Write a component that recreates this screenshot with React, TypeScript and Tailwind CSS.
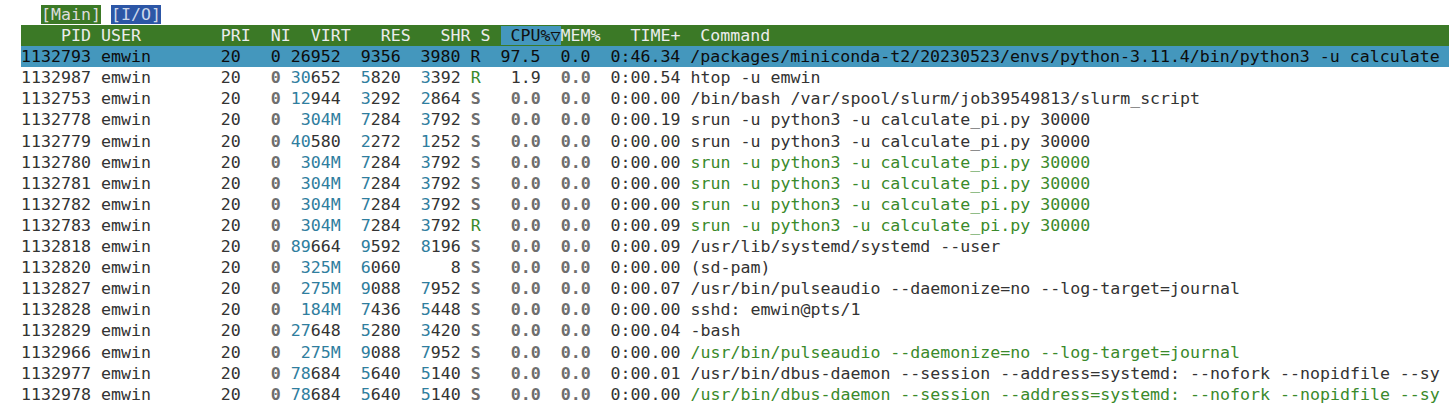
import React from "react";

type Seg = { t: string; c?: string };

const TXT = "text-[#333333]";
const DIM = "text-[#6e6e6e] font-bold";
const CYAN = "text-[#2f7e9e]";
const GREEN = "text-[#3a8a2b]";

type Row = {
  pid: string;
  virt: string;
  res: string;
  shr: string;
  s: "R" | "S";
  cpu: string;
  mem: string;
  time: string;
  cmd: string;
  thread?: boolean;
  sel?: boolean;
};

const rows: Row[] = [
  { pid: "1132793", virt: "26952", res: "9356", shr: "3980", s: "R", cpu: "97.5", mem: "0.0", time: "0:46.34", cmd: "/packages/miniconda-t2/20230523/envs/python-3.11.4/bin/python3 -u calculate", sel: true },
  { pid: "1132987", virt: "30652", res: "5820", shr: "3392", s: "R", cpu: "1.9", mem: "0.0", time: "0:00.54", cmd: "htop -u emwin" },
  { pid: "1132753", virt: "12944", res: "3292", shr: "2864", s: "S", cpu: "0.0", mem: "0.0", time: "0:00.00", cmd: "/bin/bash /var/spool/slurm/job39549813/slurm_script" },
  { pid: "1132778", virt: "304M", res: "7284", shr: "3792", s: "S", cpu: "0.0", mem: "0.0", time: "0:00.19", cmd: "srun -u python3 -u calculate_pi.py 30000" },
  { pid: "1132779", virt: "40580", res: "2272", shr: "1252", s: "S", cpu: "0.0", mem: "0.0", time: "0:00.00", cmd: "srun -u python3 -u calculate_pi.py 30000" },
  { pid: "1132780", virt: "304M", res: "7284", shr: "3792", s: "S", cpu: "0.0", mem: "0.0", time: "0:00.00", cmd: "srun -u python3 -u calculate_pi.py 30000", thread: true },
  { pid: "1132781", virt: "304M", res: "7284", shr: "3792", s: "S", cpu: "0.0", mem: "0.0", time: "0:00.00", cmd: "srun -u python3 -u calculate_pi.py 30000", thread: true },
  { pid: "1132782", virt: "304M", res: "7284", shr: "3792", s: "S", cpu: "0.0", mem: "0.0", time: "0:00.00", cmd: "srun -u python3 -u calculate_pi.py 30000", thread: true },
  { pid: "1132783", virt: "304M", res: "7284", shr: "3792", s: "R", cpu: "0.0", mem: "0.0", time: "0:00.09", cmd: "srun -u python3 -u calculate_pi.py 30000", thread: true },
  { pid: "1132818", virt: "89664", res: "9592", shr: "8196", s: "S", cpu: "0.0", mem: "0.0", time: "0:00.09", cmd: "/usr/lib/systemd/systemd --user" },
  { pid: "1132820", virt: "325M", res: "6060", shr: "8", s: "S", cpu: "0.0", mem: "0.0", time: "0:00.00", cmd: "(sd-pam)" },
  { pid: "1132827", virt: "275M", res: "9088", shr: "7952", s: "S", cpu: "0.0", mem: "0.0", time: "0:00.07", cmd: "/usr/bin/pulseaudio --daemonize=no --log-target=journal" },
  { pid: "1132828", virt: "184M", res: "7436", shr: "5448", s: "S", cpu: "0.0", mem: "0.0", time: "0:00.00", cmd: "sshd: emwin@pts/1" },
  { pid: "1132829", virt: "27648", res: "5280", shr: "3420", s: "S", cpu: "0.0", mem: "0.0", time: "0:00.04", cmd: "-bash" },
  { pid: "1132966", virt: "275M", res: "9088", shr: "7952", s: "S", cpu: "0.0", mem: "0.0", time: "0:00.00", cmd: "/usr/bin/pulseaudio --daemonize=no --log-target=journal", thread: true },
  { pid: "1132977", virt: "78684", res: "5640", shr: "5140", s: "S", cpu: "0.0", mem: "0.0", time: "0:00.01", cmd: "/usr/bin/dbus-daemon --session --address=systemd: --nofork --nopidfile --sy" },
  { pid: "1132978", virt: "78684", res: "5640", shr: "5140", s: "S", cpu: "0.0", mem: "0.0", time: "0:00.00", cmd: "/usr/bin/dbus-daemon --session --address=systemd: --nofork --nopidfile --sy", thread: true },
];

function memSegs(v: string): Seg[] {
  const pad = " ".repeat(Math.max(0, 5 - v.length));
  if (v.endsWith("M")) return [{ t: pad }, { t: v, c: CYAN }];
  if (v.length > 3) {
    return [
      { t: pad },
      { t: v.slice(0, v.length - 3), c: CYAN },
      { t: v.slice(v.length - 3), c: TXT },
    ];
  }
  return [{ t: pad + v, c: TXT }];
}

function rowSegs(r: Row): Seg[] {
  const segs: Seg[] = [];
  segs.push({ t: r.pid.padStart(7) + " " + "emwin".padEnd(11) + " 20 ", c: TXT });
  segs.push({ t: "  0", c: DIM });
  segs.push({ t: " " });
  segs.push(...memSegs(r.virt));
  segs.push({ t: " " });
  segs.push(...memSegs(r.res));
  segs.push({ t: " " });
  segs.push(...memSegs(r.shr));
  segs.push({ t: " " });
  segs.push({ t: r.s, c: r.s === "R" ? GREEN : DIM });
  segs.push({ t: " " });
  segs.push({ t: r.cpu.padStart(5), c: r.cpu === "0.0" ? DIM : TXT });
  segs.push({ t: " " });
  segs.push({ t: r.mem.padStart(4), c: r.mem === "0.0" ? DIM : TXT });
  segs.push({ t: " " });
  segs.push({ t: r.time.padStart(8), c: TXT });
  segs.push({ t: " " });
  segs.push({ t: r.cmd, c: r.thread ? GREEN : TXT });
  return segs;
}

const LINE = "h-[21.1px] leading-[21.1px] whitespace-pre overflow-hidden";

export default function App() {
  return (
    <div
      className="w-[1449px] h-[415px] bg-white overflow-hidden pt-[4px] pl-[21px] text-[16.6px]"
      style={{ fontFamily: '"DejaVu Sans Mono", "Liberation Mono", monospace' }}
    >
      <div className={LINE}>
        <span>{"  "}</span>
        <span className="bg-[#3b7926] text-[#dcdcdc]">[Main]</span>
        <span> </span>
        <span className="bg-[#2c56a6] text-[#cdd6ea]">[I/O]</span>
      </div>
      <div className={`${LINE} bg-[#3b7926] text-[#ececec]`}>
        <span>{"    PID USER        PRI  NI  VIRT   RES   SHR S "}</span>
        <span className="bg-[#4497bd] text-[#111111]">{" CPU%\u25BD"}</span>
        <span>{"MEM%   TIME+  Command"}</span>
      </div>
      {rows.map((r) => (
        <div
          key={r.pid}
          className={`${LINE} ${r.sel ? "bg-[#4497bd] text-[#0d0d0d]" : ""}`}
        >
          {r.sel
            ? rowSegs(r).map((s) => s.t).join("")
            : rowSegs(r).map((s, i) => (
                <span key={i} className={s.c}>
                  {s.t}
                </span>
              ))}
        </div>
      ))}
    </div>
  );
}
